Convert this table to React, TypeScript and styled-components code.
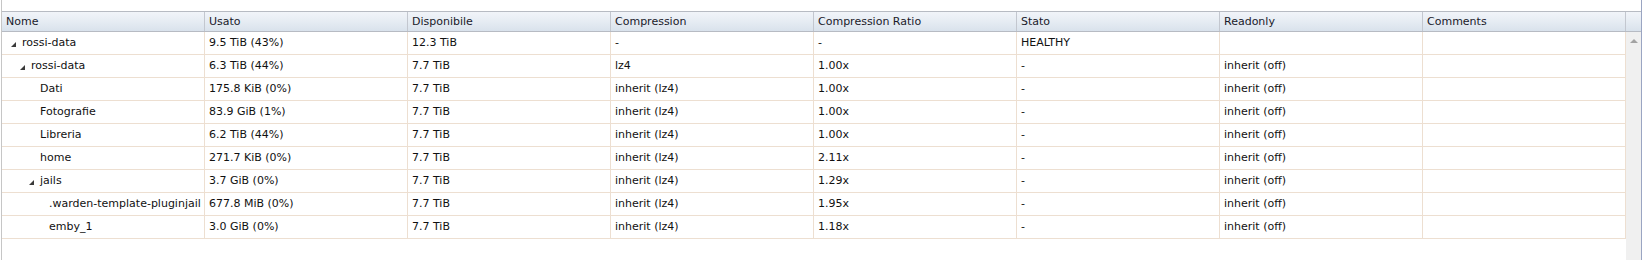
import React from 'react';
import styled, { createGlobalStyle } from 'styled-components';

const GlobalStyle = createGlobalStyle`
  html, body {
    margin: 0;
    padding: 0;
    background: #fff;
  }
  body {
    font-family: "DejaVu Sans", Verdana, sans-serif;
    font-size: 11px;
    color: #111;
  }
`;

const Panel = styled.div`
  width: 1641px;
  height: 260px;
  margin-left: 1px;
  padding-top: 11px;
  box-sizing: border-box;
  border-left: 1px solid #c6c6c6;
  border-right: 1px solid #9aa5c2;
  display: flex;
  flex-direction: column;
  overflow: hidden;
`;

const HeaderRow = styled.div`
  display: grid;
  grid-template-columns: repeat(8, 203px) 15px;
  height: 21px;
  box-sizing: border-box;
  border-top: 1px solid #b7bbc3;
  border-bottom: 1px solid #b7bbc3;
  background: linear-gradient(to bottom, #f1f4f9 0%, #e6ecf3 50%, #d9e2ec 100%);
`;

const HeaderCell = styled.div`
  border-right: 1px solid #c3c7cf;
  padding: 0 4px;
  line-height: 19px;
  color: #1a1a2a;
  white-space: nowrap;
  overflow: hidden;
`;

const ScrollCorner = styled.div``;

const Body = styled.div`
  flex: 1;
  display: flex;
`;

const Rows = styled.div`
  width: 1624px;
`;

const Row = styled.div`
  display: grid;
  grid-template-columns: repeat(8, 203px);
  height: 23px;
  box-sizing: border-box;
  border-bottom: 1px solid #eddfd1;
`;

const Cell = styled.div`
  border-right: 1px solid #eddfd1;
  padding-left: 4px;
  line-height: 22px;
  white-space: nowrap;
  overflow: hidden;
  display: flex;
  align-items: center;
`;

const TreeCell = styled(Cell)<{ $level: number }>`
  padding-left: ${(p) => 9 + p.$level * 9}px;
`;

const Toggle = styled.span`
  width: 5px;
  height: 5px;
  margin-right: 6px;
  flex: none;
  display: inline-flex;
  transform: translateY(1px);
`;

const Label = styled.span`
  flex: none;
`;

const Scrollbar = styled.div`
  width: 16px;
  background: #f0f0f0;
  display: flex;
  justify-content: center;
  padding-top: 7px;
  box-sizing: border-box;
`;

const ArrowUp = styled.div`
  width: 0;
  height: 0;
  border-left: 4px solid transparent;
  border-right: 4px solid transparent;
  border-bottom: 4px solid #a3a3a3;
`;

type Item = {
  name: string;
  level: number;
  open?: boolean;
  used: string;
  avail: string;
  comp: string;
  ratio: string;
  state: string;
  ro: string;
};

const items: Item[] = [
  { name: 'rossi-data', level: 0, open: true, used: '9.5 TiB (43%)', avail: '12.3 TiB', comp: '-', ratio: '-', state: 'HEALTHY', ro: '' },
  { name: 'rossi-data', level: 1, open: true, used: '6.3 TiB (44%)', avail: '7.7 TiB', comp: 'lz4', ratio: '1.00x', state: '-', ro: 'inherit (off)' },
  { name: 'Dati', level: 2, used: '175.8 KiB (0%)', avail: '7.7 TiB', comp: 'inherit (lz4)', ratio: '1.00x', state: '-', ro: 'inherit (off)' },
  { name: 'Fotografie', level: 2, used: '83.9 GiB (1%)', avail: '7.7 TiB', comp: 'inherit (lz4)', ratio: '1.00x', state: '-', ro: 'inherit (off)' },
  { name: 'Libreria', level: 2, used: '6.2 TiB (44%)', avail: '7.7 TiB', comp: 'inherit (lz4)', ratio: '1.00x', state: '-', ro: 'inherit (off)' },
  { name: 'home', level: 2, used: '271.7 KiB (0%)', avail: '7.7 TiB', comp: 'inherit (lz4)', ratio: '2.11x', state: '-', ro: 'inherit (off)' },
  { name: 'jails', level: 2, open: true, used: '3.7 GiB (0%)', avail: '7.7 TiB', comp: 'inherit (lz4)', ratio: '1.29x', state: '-', ro: 'inherit (off)' },
  { name: '.warden-template-pluginjail', level: 3, used: '677.8 MiB (0%)', avail: '7.7 TiB', comp: 'inherit (lz4)', ratio: '1.95x', state: '-', ro: 'inherit (off)' },
  { name: 'emby_1', level: 3, used: '3.0 GiB (0%)', avail: '7.7 TiB', comp: 'inherit (lz4)', ratio: '1.18x', state: '-', ro: 'inherit (off)' },
];

const columns = ['Nome', 'Usato', 'Disponibile', 'Compression', 'Compression Ratio', 'Stato', 'Readonly', 'Comments'];

const Expander: React.FC = () => (
  <Toggle>
    <svg width="5" height="5" viewBox="0 0 5 5">
      <polygon points="5,0 5,5 0,5" fill="#3a3a3a" />
    </svg>
  </Toggle>
);

export default function App() {
  return (
    <>
      <GlobalStyle />
      <Panel>
        <HeaderRow>
          {columns.map((c) => (
            <HeaderCell key={c}>{c}</HeaderCell>
          ))}
          <ScrollCorner />
        </HeaderRow>
        <Body>
          <Rows>
            {items.map((it, i) => (
              <Row key={i}>
                <TreeCell $level={it.level}>
                  {it.open ? <Expander /> : <Toggle />}
                  <Label>{it.name}</Label>
                </TreeCell>
                <Cell>{it.used}</Cell>
                <Cell>{it.avail}</Cell>
                <Cell>{it.comp}</Cell>
                <Cell>{it.ratio}</Cell>
                <Cell>{it.state}</Cell>
                <Cell>{it.ro}</Cell>
                <Cell />
              </Row>
            ))}
          </Rows>
          <Scrollbar>
            <ArrowUp />
          </Scrollbar>
        </Body>
      </Panel>
    </>
  );
}
